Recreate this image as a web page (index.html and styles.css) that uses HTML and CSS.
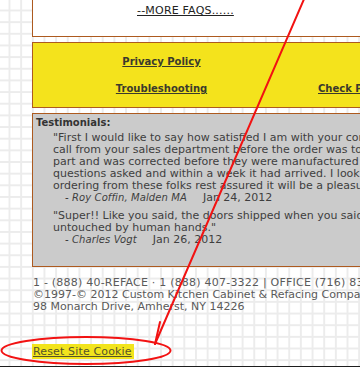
FILE: index.html
```html
<!DOCTYPE html>
<html lang="en">
<head>
<meta charset="utf-8">
<title>Footer</title>
<link rel="stylesheet" href="styles.css">
</head>
<body>
<div class="page">
  <div class="box faq-box">
    <a class="more" href="#">--MORE FAQS......</a>
  </div>
  <div class="box links-box">
    <a class="lk" href="#">Privacy Policy</a>
    <span class="lk-empty"></span>
    <a class="lk" href="#">Troubleshooting</a>
    <a class="lk lk-right" href="#">Check Prices</a>
  </div>
  <div class="box testi-box">
    <div class="testi-title">Testimonials:</div>
    <div class="quote">
      <div class="quote-text">"First I would like to say how satisfied I am with your company and service. I received a<br>call from your sales department before the order was to ship to confirm a<br>part and was corrected before they were manufactured with no<br>questions asked and within a week it had arrived. I look forward to<br>ordering from these folks rest assured it will be a pleasure."</div>
      <div class="author"><i class="name">- Roy Coffin, Malden MA</i><span class="date">Jan 24, 2012</span></div>
    </div>
    <div class="quote quote-next">
      <div class="quote-text">"Super!! Like you said, the doors shipped when you said and arrived<br>untouched by human hands."</div>
      <div class="author"><i class="name">- Charles Vogt</i><span class="date">Jan 26, 2012</span></div>
    </div>
  </div>
  <div class="contact"><span class="phones">1 - (888) 40-REFACE · 1 (888) 407-3322 | OFFICE (716) 833-6440</span><br>©1997-© 2012 Custom Kitchen Cabinet &amp; Refacing Company<br>98 Monarch Drive, Amherst, NY 14226</div>
  <div class="reset-row"><a class="reset" href="#">Reset Site Cookie</a></div>
</div>
<svg class="annot" width="360" height="367" viewBox="0 0 360 367" aria-hidden="true">
  <g fill="none" stroke="#f21212" stroke-width="2" stroke-linecap="round">
    <line x1="304.5" y1="-2" x2="155" y2="344"/>
    <line x1="155" y1="344" x2="160" y2="322"/>
    <ellipse cx="86" cy="350.5" rx="84.5" ry="13.5"/>
  </g>
</svg>
</body>
</html>
```

FILE: styles.css
```css
html, body {
  margin: 0;
  padding: 0;
  overflow: hidden;
}

body {
  position: relative;
  width: 360px;
  height: 367px;
  font-family: "DejaVu Sans", Verdana, sans-serif;
  font-size: 11px;
  line-height: 12px;
  color: #444;
}

.page {
  height: 366px;
  border-bottom: 1px solid #1e1e1e;
  overflow: hidden;
  padding-left: 32px;
  background-color: #fff;
  background-image:
    linear-gradient(90deg, #ececec 2px, transparent 2px),
    linear-gradient(#ececec 2px, transparent 2px);
  background-size: 11.67px 11.67px;
  background-position: 8.5px 9.5px;
}

.box {
  margin-right: -30px;
  border: 1px solid #ad5a1f;
  white-space: nowrap;
}

.faq-box {
  background: #fff;
  border-top: none;
  height: 37px;
  box-sizing: border-box;
  padding-top: 5px;
  padding-left: 104px;
}

.more {
  color: #222;
  text-decoration: underline;
  letter-spacing: 0.2px;
}

.links-box {
  margin-top: 5px;
  background: #f4e31c;
  padding: 13px 0 12px;
  display: grid;
  grid-template-columns: 257px 1fr;
  grid-template-rows: 12px 12px;
  row-gap: 15px;
}

.lk {
  font-size: 10px;
  font-weight: bold;
  color: #3a3a2c;
  text-decoration: underline;
  text-align: center;
  justify-self: center;
}

.lk-right {
  justify-self: start;
  padding-left: 28px;
}

.testi-box {
  margin-top: 5px;
  background: #cbcbcb;
  padding: 3px 0 20px 3px;
  color: #3e3e3e;
}

.testi-title {
  font-size: 10px;
  font-weight: bold;
  color: #333;
}

.quote {
  margin-top: 3px;
  padding-left: 17px;
}

.quote-next {
  margin-top: 6px;
}

.author {
  padding-left: 12px;
}

.name {
  font-size: 10px;
  letter-spacing: 0.1px;
}

.date {
  margin-left: 16px;
}

.contact {
  margin-top: 10px;
  padding-left: 1px;
  color: #5a5a5a;
  white-space: nowrap;
}

.phones {
  letter-spacing: 0.22px;
}

.reset-row {
  margin-top: 31px;
}

.reset {
  display: inline-block;
  background: #f2e41c;
  color: #55532a;
  line-height: 15px;
  padding: 0 2px 0 1px;
  letter-spacing: 0.15px;
  text-decoration: underline;
}

.annot {
  position: absolute;
  top: 0;
  left: 0;
  pointer-events: none;
}
```
